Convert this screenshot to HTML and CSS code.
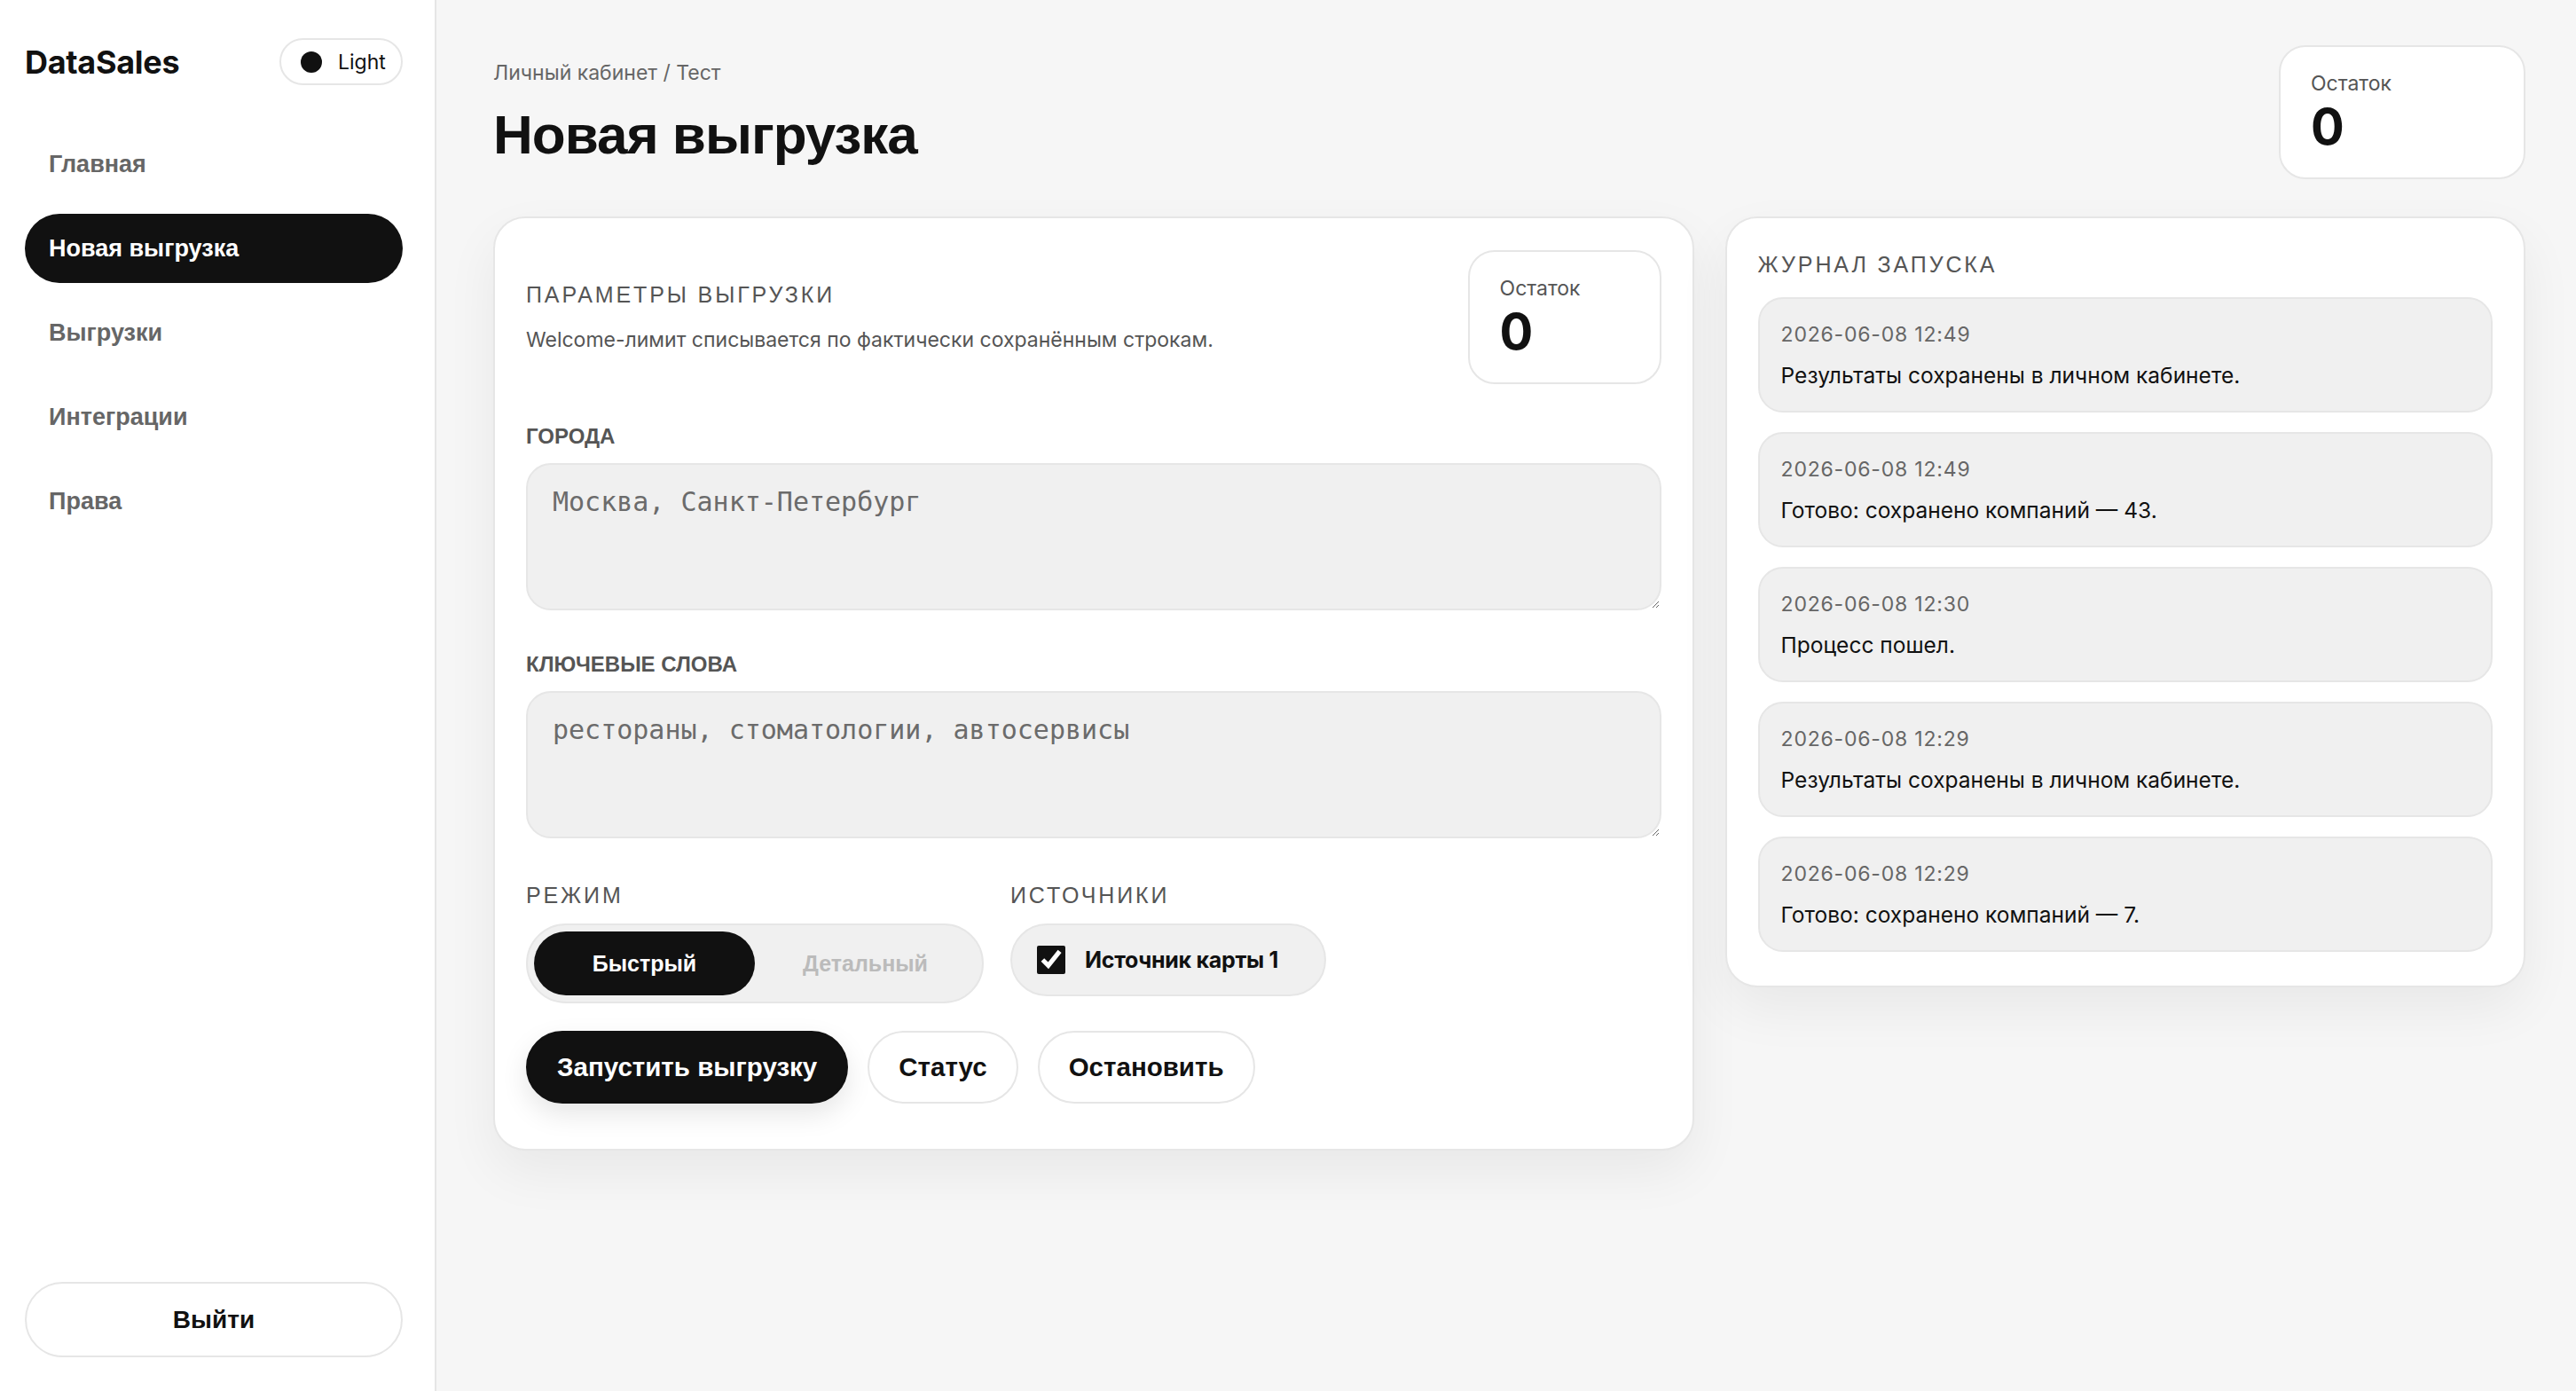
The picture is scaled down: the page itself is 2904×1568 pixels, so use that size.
FILE: index.html
```html
<!DOCTYPE html>
<html lang="ru">
<head>
  <meta charset="UTF-8">
  <meta name="viewport" content="width=device-width, initial-scale=1.0">
  <title>DataSales — Новая выгрузка</title>
  <link rel="stylesheet" href="styles.css">
</head>
<body>
  <!-- Sidebar -->
  <aside class="sidebar">
    <div class="sidebar-top">
      <div class="brand">DataSales</div>
      <button class="theme-toggle" type="button"><span class="theme-dot"></span>Light</button>
    </div>
    <nav class="side-nav">
      <a href="#" class="nav-item">Главная</a>
      <a href="#" class="nav-item active">Новая выгрузка</a>
      <a href="#" class="nav-item">Выгрузки</a>
      <a href="#" class="nav-item">Интеграции</a>
      <a href="#" class="nav-item">Права</a>
    </nav>
    <button class="logout-btn" type="button">Выйти</button>
  </aside>

  <!-- Main -->
  <main class="content">
    <div class="page-head">
      <div class="page-head-text">
        <div class="crumbs">Личный кабинет / Тест</div>
        <h1 class="page-title">Новая выгрузка</h1>
      </div>
      <div class="stat-card stat-card-wide">
        <div class="stat-label">Остаток</div>
        <div class="stat-value">0</div>
      </div>
    </div>

    <div class="layout">
      <!-- Form -->
      <section class="card form-card">
        <div class="form-head">
          <div>
            <div class="section-title">Параметры выгрузки</div>
            <div class="section-desc">Welcome-лимит списывается по фактически сохранённым строкам.</div>
          </div>
          <div class="stat-card stat-card-small">
            <div class="stat-label">Остаток</div>
            <div class="stat-value">0</div>
          </div>
        </div>

        <div class="field">
          <label class="field-label" for="cities">Города</label>
          <textarea id="cities" class="field-input" placeholder="Москва, Санкт-Петербург"></textarea>
        </div>
        <div class="field">
          <label class="field-label" for="keywords">Ключевые слова</label>
          <textarea id="keywords" class="field-input" placeholder="рестораны, стоматологии, автосервисы"></textarea>
        </div>

        <div class="options">
          <div class="option-group">
            <div class="section-title">Режим</div>
            <div class="segmented">
              <button class="seg-btn active" type="button">Быстрый</button>
              <button class="seg-btn" type="button">Детальный</button>
            </div>
          </div>
          <div class="option-group">
            <div class="section-title">Источники</div>
            <label class="source-pill">
              <input type="checkbox" checked>
              <span>Источник карты 1</span>
            </label>
          </div>
        </div>

        <div class="actions">
          <button class="btn btn-primary" type="button">Запустить выгрузку</button>
          <button class="btn" type="button">Статус</button>
          <button class="btn" type="button">Остановить</button>
        </div>
      </section>

      <!-- Log -->
      <section class="card log-card">
        <div class="section-title log-title">Журнал запуска</div>
        <div class="log-list">
          <div class="log-item">
            <div class="log-time">2026-06-08 12:49</div>
            <div class="log-msg">Результаты сохранены в личном кабинете.</div>
          </div>
          <div class="log-item">
            <div class="log-time">2026-06-08 12:49</div>
            <div class="log-msg">Готово: сохранено компаний — 43.</div>
          </div>
          <div class="log-item">
            <div class="log-time">2026-06-08 12:30</div>
            <div class="log-msg">Процесс пошел.</div>
          </div>
          <div class="log-item">
            <div class="log-time">2026-06-08 12:29</div>
            <div class="log-msg">Результаты сохранены в личном кабинете.</div>
          </div>
          <div class="log-item">
            <div class="log-time">2026-06-08 12:29</div>
            <div class="log-msg">Готово: сохранено компаний — 7.</div>
          </div>
        </div>
      </section>
    </div>
  </main>
</body>
</html>
```

FILE: styles.css
```css
:root {
  --ink: #111;
  --muted: #666;
  --line: #e6e6e6;
  --soft: #f0f0f0;
  --page: #f6f6f6;
  --white: #fff;
}
* {
  box-sizing: border-box;
}
body {
  margin: 0;
  height: 100vh;
  display: flex;
  font-family: Inter, "Noto Sans", sans-serif;
  color: var(--ink);
  background: var(--page);
}
button {
  font-family: "Liberation Sans", Arial, sans-serif;
  cursor: pointer;
}

/* Sidebar */
.sidebar {
  width: 492px;
  flex-shrink: 0;
  background: var(--white);
  border-right: 2px solid var(--line);
  padding: 43px 36px 38px 28px;
  display: flex;
  flex-direction: column;
}
.sidebar-top {
  display: flex;
  align-items: center;
  justify-content: space-between;
  height: 53px;
}
.brand {
  font-size: 36px;
  font-weight: 700;
  letter-spacing: -0.3px;
}
.theme-toggle {
  height: 53px;
  width: 139px;
  display: flex;
  align-items: center;
  gap: 18px;
  padding: 0 0 0 22px;
  border: 2px solid var(--line);
  border-radius: 999px;
  background: var(--white);
  font-family: Inter, sans-serif;
  font-size: 23px;
  color: var(--ink);
}
.theme-dot {
  width: 24px;
  height: 24px;
  border-radius: 50%;
  background: var(--ink);
}
.side-nav {
  margin-top: 50px;
  display: flex;
  flex-direction: column;
  gap: 17px;
}
.nav-item {
  height: 78px;
  display: flex;
  align-items: center;
  padding: 0 27px;
  border-radius: 39px;
  font-family: "Liberation Sans", Arial, sans-serif;
  font-weight: 700;
  font-size: 27px;
  color: var(--muted);
  text-decoration: none;
}
.nav-item.active {
  background: var(--ink);
  color: var(--white);
}
.logout-btn {
  margin-top: auto;
  height: 85px;
  border: 2px solid var(--line);
  border-radius: 999px;
  background: var(--white);
  font-size: 28px;
  font-weight: 700;
  color: var(--ink);
}

/* Main */
.content {
  flex: 1;
  padding: 51px 57px 40px 64px;
}
.page-head {
  display: flex;
  align-items: center;
  justify-content: space-between;
}
.crumbs {
  font-size: 23px;
  line-height: 30px;
  color: var(--muted);
}
.page-title {
  margin: 21px 0 0 0;
  font-family: "Liberation Sans", Arial, sans-serif;
  font-size: 62px;
  line-height: 68px;
  font-weight: 700;
  letter-spacing: -1px;
}
.stat-card {
  background: var(--white);
  border: 2px solid var(--line);
  border-radius: 30px;
  padding: 28px 34px;
  height: 151px;
}
.stat-card-wide {
  width: 278px;
}
.stat-card-small {
  width: 218px;
}
.stat-label {
  font-size: 23px;
  line-height: 26px;
  color: #555;
}
.stat-value {
  margin-top: 6px;
  font-size: 56px;
  line-height: 60px;
  font-weight: 700;
}

/* Cards */
.layout {
  margin-top: 42px;
  display: grid;
  grid-template-columns: 3fr 2fr;
  gap: 35px;
  align-items: start;
}
.card {
  background: var(--white);
  border: 2px solid var(--line);
  border-radius: 36px;
  box-shadow: 0 24px 60px rgba(0, 0, 0, 0.06);
}
.form-card {
  padding: 36px 35px 51px 35px;
}
.form-head {
  display: flex;
  align-items: center;
  justify-content: space-between;
}
.section-title {
  font-family: "Liberation Sans", Arial, sans-serif;
  font-size: 25px;
  line-height: 30px;
  letter-spacing: 0.115em;
  text-transform: uppercase;
  color: #555;
}
.section-desc {
  margin-top: 21px;
  font-size: 23px;
  line-height: 30px;
  color: #555;
}
.field {
  margin-top: 45px;
}
.field + .field {
  margin-top: 47px;
}
.field-label {
  display: block;
  font-family: "Liberation Sans", Arial, sans-serif;
  font-weight: 700;
  font-size: 24px;
  line-height: 28px;
  text-transform: uppercase;
  color: #555;
  margin-bottom: 16px;
}
.field-input {
  display: block;
  width: 100%;
  height: 166px;
  padding: 24px 28px;
  background: var(--soft);
  border: 2px solid var(--line);
  border-radius: 28px;
  font-family: "DejaVu Sans Mono", "Liberation Mono", monospace;
  font-size: 30px;
  color: var(--ink);
  outline: none;
}
.field-input::placeholder {
  color: #6b6b6b;
}
.options {
  margin-top: 49px;
  display: flex;
  gap: 30px;
}
.option-group .section-title {
  margin-bottom: 17px;
}
.segmented {
  display: flex;
  padding: 7px;
  background: var(--soft);
  border: 2px solid var(--line);
  border-radius: 999px;
}
.seg-btn {
  width: 249px;
  height: 72px;
  border: none;
  border-radius: 999px;
  background: transparent;
  font-size: 25px;
  font-weight: 700;
  color: #bbb;
}
.seg-btn.active {
  background: var(--ink);
  color: var(--white);
}
.source-pill {
  height: 82px;
  display: flex;
  align-items: center;
  gap: 22px;
  padding: 0 52px 0 28px;
  background: var(--soft);
  border: 2px solid var(--line);
  border-radius: 999px;
  font-size: 25px;
  font-weight: 700;
  letter-spacing: -0.3px;
}
.source-pill input {
  width: 32px;
  height: 32px;
  margin: 0;
  accent-color: var(--ink);
}
.actions {
  margin-top: 31px;
  display: flex;
  align-items: center;
  gap: 22px;
}
.btn {
  height: 82px;
  padding: 0 33px;
  border: 2px solid var(--line);
  border-radius: 999px;
  background: var(--white);
  font-size: 29.5px;
  font-weight: 700;
  color: var(--ink);
}
.btn-primary {
  background: var(--ink);
  border-color: var(--ink);
  color: var(--white);
  box-shadow: 0 12px 30px rgba(0, 0, 0, 0.1);
}

/* Log */
.log-card {
  padding: 36px 35px 38px 35px;
}
.log-title {
  line-height: 32px;
  margin-bottom: 21px;
}
.log-list {
  display: flex;
  flex-direction: column;
  gap: 22px;
}
.log-item {
  background: var(--soft);
  border: 2px solid var(--line);
  border-radius: 28px;
  padding: 25px 24px;
}
.log-time {
  font-size: 23px;
  line-height: 30px;
  letter-spacing: 0.8px;
  color: var(--muted);
}
.log-msg {
  margin-top: 16px;
  font-size: 24.5px;
  line-height: 30px;
}
```
